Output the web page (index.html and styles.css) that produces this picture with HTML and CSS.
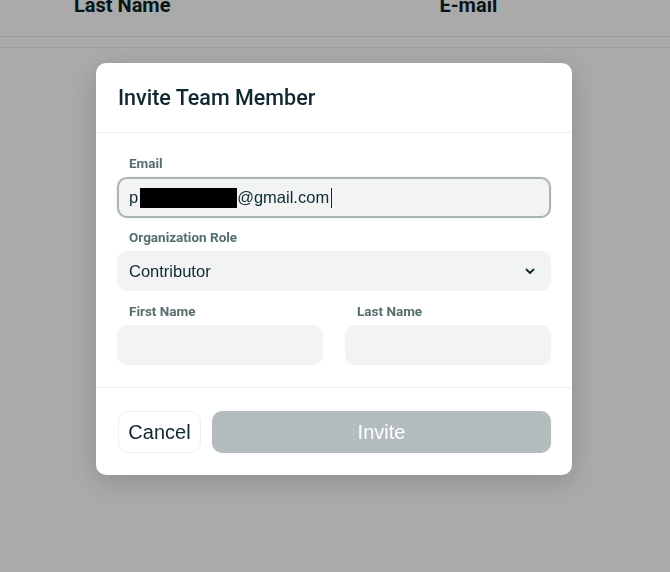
FILE: index.html
```html
<!DOCTYPE html>
<html lang="en">
<head>
<meta charset="utf-8">
<title>Invite Team Member</title>
<link rel="stylesheet" href="styles.css">
</head>
<body>
  <div class="table-head">
    <div class="table-head-row">
      <span class="col col-last">Last Name</span>
      <span class="col col-mail">E-mail</span>
    </div>
  </div>
  <div class="table-sub"></div>

  <div class="overlay">
    <div class="modal" role="dialog" aria-labelledby="invite-title">
      <div class="modal-header">
        <h2 id="invite-title" class="modal-title">Invite Team Member</h2>
      </div>
      <div class="modal-body">
        <div class="field">
          <label class="field-label">Email</label>
          <div class="input input-focused">
            <span class="input-text">p<span class="redacted"></span>@gmail.com</span><span class="caret"></span>
          </div>
        </div>
        <div class="field">
          <label class="field-label">Organization Role</label>
          <div class="input select">
            <span class="input-text">Contributor</span>
            <svg class="chevron" width="10" height="7" viewBox="0 0 10 7" aria-hidden="true">
              <path d="M1.5 1.5 L5 5 L8.5 1.5" fill="none" stroke="#0e2a30" stroke-width="1.8" stroke-linecap="round" stroke-linejoin="round"/>
            </svg>
          </div>
        </div>
        <div class="field-row">
          <div class="field">
            <label class="field-label">First Name</label>
            <div class="input"></div>
          </div>
          <div class="field">
            <label class="field-label">Last Name</label>
            <div class="input"></div>
          </div>
        </div>
      </div>
      <div class="modal-footer">
        <button class="btn btn-cancel" type="button">Cancel</button>
        <button class="btn btn-invite" type="button" disabled>Invite</button>
      </div>
    </div>
  </div>
</body>
</html>
```

FILE: styles.css
```css
html, body {
  margin: 0;
  padding: 0;
}

body {
  width: 670px;
  height: 572px;
  overflow: hidden;
  background: #ffffff;
  font-family: "Liberation Sans", Arial, sans-serif;
}

/* table header behind the dialog */
.table-head {
  height: 36px;
  border-bottom: 1px solid #e4e6e6;
  overflow: hidden;
}

.table-head-row {
  display: flex;
  margin-top: -7px;
  font-family: Roboto, "Noto Sans", sans-serif;
  font-weight: 700;
  font-size: 20px;
  line-height: 24px;
  color: #0b2126;
}

.col-last {
  margin-left: 74px;
}

.col-mail {
  margin-left: 269px;
}

.table-sub {
  height: 10px;
  border-bottom: 1px solid #eceeee;
}

/* dimmed backdrop */
.overlay {
  position: fixed;
  inset: 0;
  background: rgba(0, 0, 0, 0.335);
  display: flex;
  justify-content: flex-start;
  align-items: flex-start;
  padding: 63px 0 0 96px;
}

.modal {
  width: 476px;
  background: #ffffff;
  border-radius: 10px;
  box-shadow: 0 6px 28px rgba(0, 0, 0, 0.18);
  overflow: hidden;
}

.modal-header {
  height: 69px;
  display: flex;
  align-items: center;
  padding: 0 22px;
  border-bottom: 1px solid #eef0f0;
}

.modal-title {
  margin: 0;
  font-family: Roboto, "Noto Sans", sans-serif;
  font-weight: 500;
  font-size: 21.5px;
  color: #0e2a30;
}

.modal-body {
  padding: 22px 21px 22px 21px;
  border-bottom: 1px solid #eef0f0;
  display: flex;
  flex-direction: column;
  gap: 11px;
}

.field {
  display: flex;
  flex-direction: column;
  gap: 6px;
  flex: 1;
}

.field-label {
  display: block;
  padding-left: 12px;
  font-family: Roboto, "Noto Sans", sans-serif;
  font-weight: 700;
  font-size: 13.5px;
  line-height: 16px;
  color: #566d6e;
}

.field-row {
  display: flex;
  gap: 22px;
  margin-top: 1px;
}

.input {
  box-sizing: border-box;
  height: 40px;
  background: #f2f3f3;
  border-radius: 10px;
  display: flex;
  align-items: center;
  padding: 0 12px;
  font-size: 16.5px;
  color: #0e2a30;
}

.input-focused {
  height: 41px;
  border: 2px solid #a9b5b5;
  padding-left: 10px;
  box-shadow: 0 0 2px rgba(0, 0, 0, 0.12);
}

.input-text {
  display: inline-flex;
  align-items: center;
  white-space: nowrap;
}

.redacted {
  display: inline-block;
  width: 97px;
  height: 20px;
  background: #000000;
  margin-left: 2px;
  margin-right: 0;
}

.caret {
  display: inline-block;
  width: 1px;
  height: 20px;
  background: #0e2a30;
  margin-left: 2px;
}

.select {
  justify-content: space-between;
  padding-right: 16px;
}

.chevron {
  display: block;
}

.modal-footer {
  display: flex;
  gap: 11px;
  padding: 23px 21px 22px 22px;
}

.btn {
  height: 42px;
  border-radius: 10px;
  font-family: "Liberation Sans", Arial, sans-serif;
  font-size: 20px;
  cursor: pointer;
}

.btn-cancel {
  width: 83px;
  background: #ffffff;
  border: 1px solid #eef0f0;
  color: #0e2a30;
  padding: 0;
}

.btn-invite {
  flex: 1;
  background: #b3bdbd;
  border: none;
  color: #ffffff;
}
```
